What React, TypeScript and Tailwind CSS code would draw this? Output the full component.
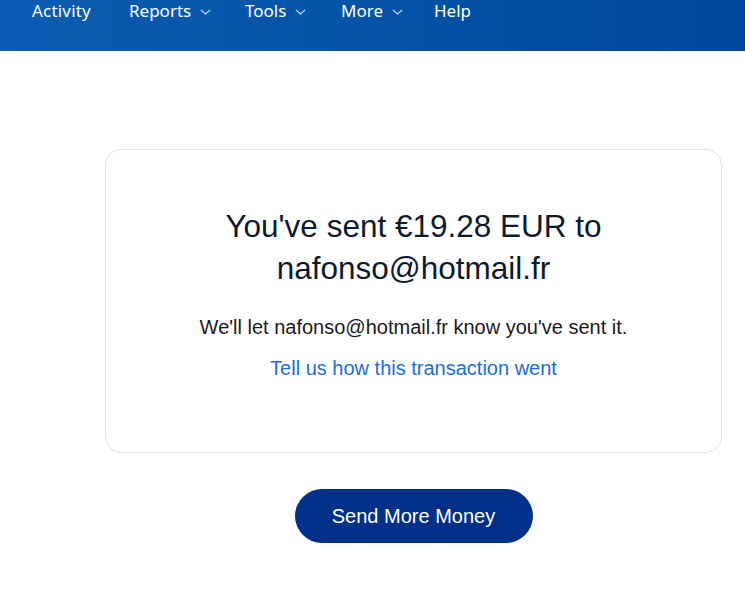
import React from "react";

function Chevron() {
  return (
    <svg width="11" height="6" viewBox="0 0 11 6" fill="none" className="ml-[9px] mt-[2px]">
      <path d="M0.8 0.8 L5.5 5 L10.2 0.8" stroke="#d6e4f5" strokeWidth="1.1" />
    </svg>
  );
}

export default function App() {
  return (
    <div className="w-[745px] h-[616px] bg-white overflow-hidden">
      <header className="h-[51px] bg-gradient-to-r from-[#0a5db2] to-[#01479b] flex items-start">
        <nav
          className="flex items-center text-white text-[17px] leading-[22px] pl-[32px]"
          style={{ fontFamily: '"Noto Sans", "Open Sans", sans-serif' }}
        >
          <span className="w-[97px] tracking-[0.2px]">Activity</span>
          <span className="w-[116px] flex items-center">Reports<Chevron /></span>
          <span className="w-[96px] flex items-center">Tools<Chevron /></span>
          <span className="w-[93px] flex items-center">More<Chevron /></span>
          <span>Help</span>
        </nav>
      </header>
      <main
        className="ml-[105px] w-[617px] pt-[98px] flex flex-col items-center"
        style={{ fontFamily: '"Liberation Sans", Arial, sans-serif' }}
      >
        <div className="w-full h-[304px] border border-[#e3e3e3] rounded-[16px] flex flex-col items-center pt-[55px]">
          <h1 className="text-[31.5px] leading-[42px] text-[#0c1a2b] text-center w-[440px]">
            You've sent €19.28 EUR to nafonso@hotmail.fr
          </h1>
          <p className="mt-[26px] text-[20px] leading-[24px] text-[#1a1a1a]">
            We'll let nafonso@hotmail.fr know you've sent it.
          </p>
          <a className="mt-[17px] text-[20px] leading-[24px] text-[#1a6dd8] cursor-pointer">
            Tell us how this transaction went
          </a>
        </div>
        <button className="mt-[36px] w-[238px] h-[54px] rounded-full bg-[#003087] text-white text-[20px] leading-[24px] pb-[1px]">
          Send More Money
        </button>
      </main>
    </div>
  );
}
